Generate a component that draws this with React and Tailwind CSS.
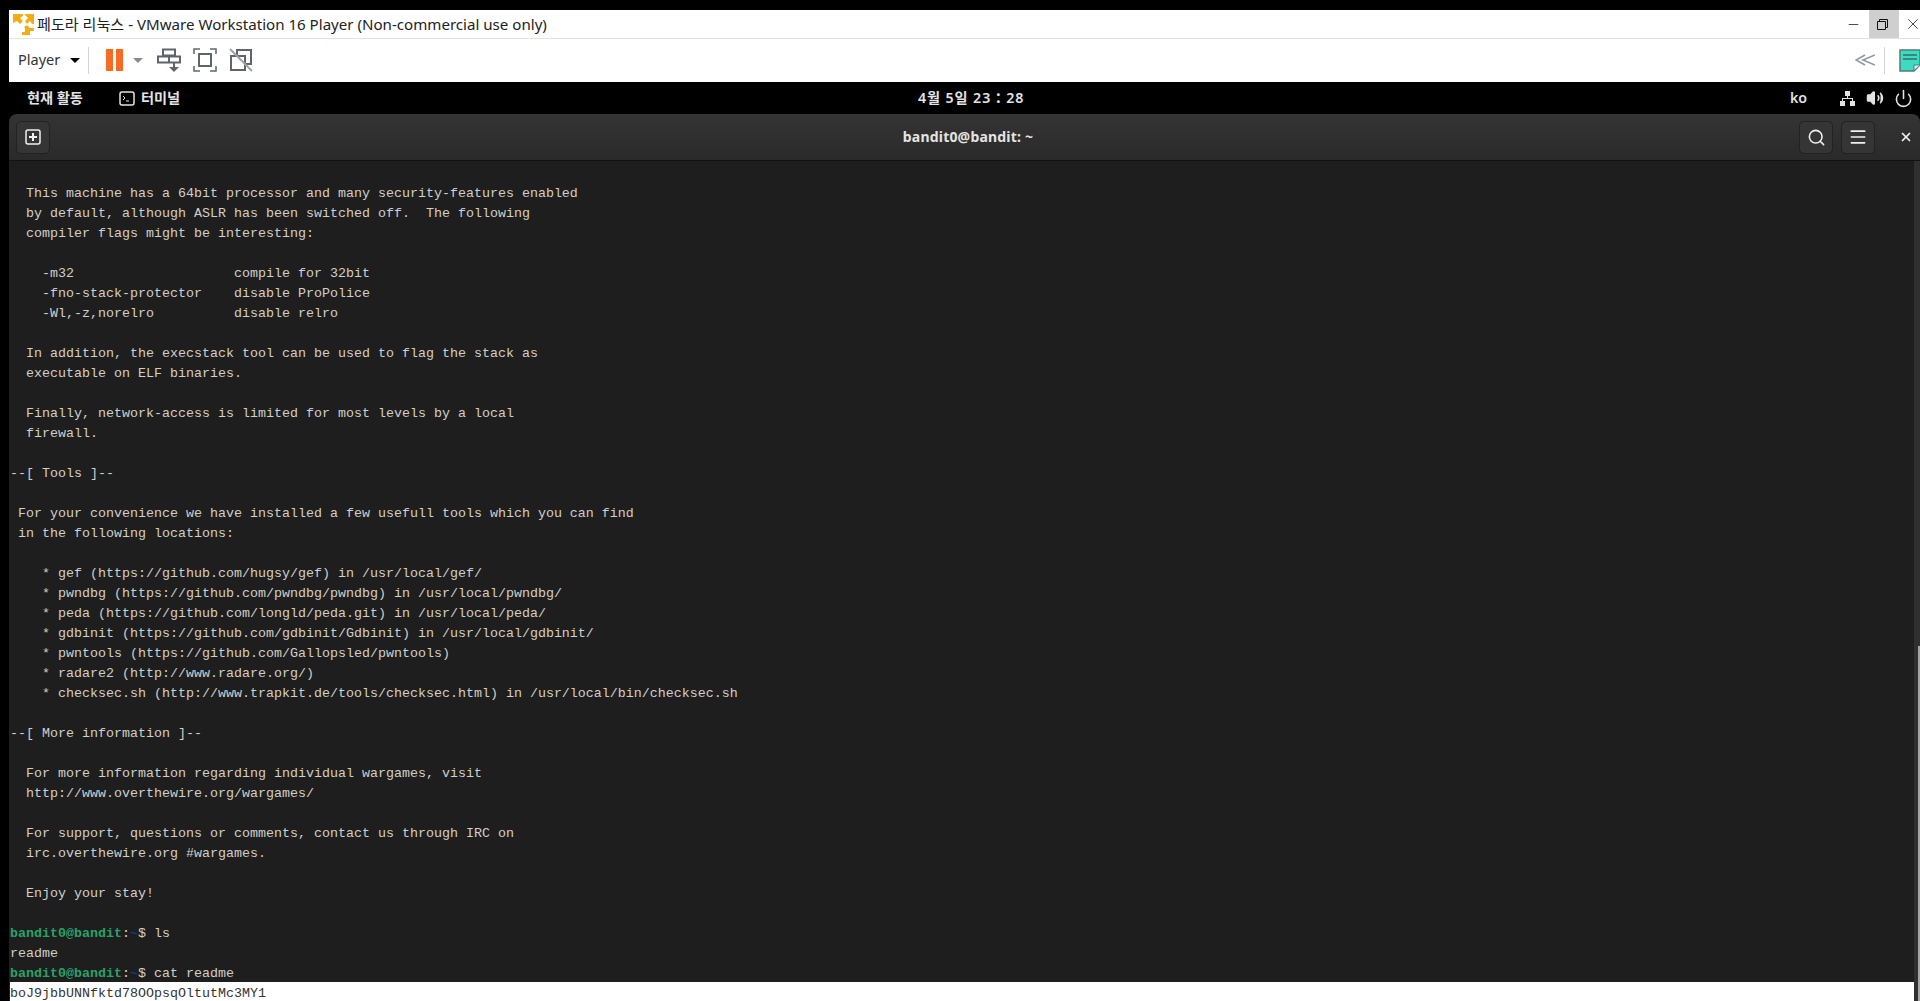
import { Search, Menu, Power, Volume2, X, Minus } from "lucide-react";

const uiFont = { fontFamily: '"Noto Sans", "Noto Sans CJK KR", sans-serif' };

const lines = [
  "  This machine has a 64bit processor and many security-features enabled",
  "  by default, although ASLR has been switched off.  The following",
  "  compiler flags might be interesting:",
  "",
  "    -m32                    compile for 32bit",
  "    -fno-stack-protector    disable ProPolice",
  "    -Wl,-z,norelro          disable relro",
  "",
  "  In addition, the execstack tool can be used to flag the stack as",
  "  executable on ELF binaries.",
  "",
  "  Finally, network-access is limited for most levels by a local",
  "  firewall.",
  "",
  "--[ Tools ]--",
  "",
  " For your convenience we have installed a few usefull tools which you can find",
  " in the following locations:",
  "",
  "    * gef (https://github.com/hugsy/gef) in /usr/local/gef/",
  "    * pwndbg (https://github.com/pwndbg/pwndbg) in /usr/local/pwndbg/",
  "    * peda (https://github.com/longld/peda.git) in /usr/local/peda/",
  "    * gdbinit (https://github.com/gdbinit/Gdbinit) in /usr/local/gdbinit/",
  "    * pwntools (https://github.com/Gallopsled/pwntools)",
  "    * radare2 (http://www.radare.org/)",
  "    * checksec.sh (http://www.trapkit.de/tools/checksec.html) in /usr/local/bin/checksec.sh",
  "",
  "--[ More information ]--",
  "",
  "  For more information regarding individual wargames, visit",
  "  http://www.overthewire.org/wargames/",
  "",
  "  For support, questions or comments, contact us through IRC on",
  "  irc.overthewire.org #wargames.",
  "",
  "  Enjoy your stay!",
  "",
];

const Prompt = ({ cmd }) => (
  <div className="h-5">
    <span className="font-bold text-[#26a269]">bandit0@bandit</span>
    <span>:</span>
    <span className="text-[#12488b]">~</span>
    <span>$ {cmd}</span>
  </div>
);

const VmLogo = () => (
  <svg width="21" height="21" viewBox="0 0 21 21" fill="#f0ae14">
    <path d="M0 0h10v2L7 4l3 3-3 3-3-3-4 2z" />
    <path d="M12 0h9v10h-2l-2-3-3 3-2-3 3-3-3-3z" />
    <path d="M11 13l3-2 3 3h4v3h-4v4H9v-3h3v-4z" />
  </svg>
);

const SendKeys = () => (
  <svg width="24" height="25" viewBox="0 0 24 25" fill="none" stroke="#5f666b" strokeWidth="2">
    <path d="M6 1.500h12v6H6zM1 8.500h11v6H1zM12 8.500h11v6H12z" />
    <path d="M17 15v4" />
    <path d="M12 19h10l-5 5z" fill="#5f666b" stroke="none" />
  </svg>
);

const FullScreen = () => (
  <svg width="24" height="24" viewBox="0 0 24 24" fill="none" stroke="#5f666b" strokeWidth="2">
    <path d="M6 6h12v12H6z" />
    <path d="M1 6V1h6M17 1h6v5M23 18v5h-6M7 23H1v-5" strokeWidth="1.500" />
  </svg>
);

const Unity = () => (
  <svg width="24" height="24" viewBox="0 0 24 24" fill="none" stroke="#5f666b" strokeWidth="2">
    <path d="M8 8V2h14v14h-6" />
    <path d="M2 8h14v14H2z" />
    <path d="M1 1l22 22" stroke="#9aa3a8" strokeWidth="2" />
  </svg>
);

const Note = () => (
  <svg width="21" height="23" viewBox="0 0 21 23">
    <path d="M1 1h20v15l-6 6H1z" fill="#3bdcc0" stroke="#4f7d7c" strokeWidth="1.500" />
    <path d="M4 6h14M4 10h14" stroke="#3d6a6c" strokeWidth="1.500" />
    <path d="M15 21v-5h6" fill="#d8f5ee" stroke="#4f7d7c" />
  </svg>
);

const Network = () => (
  <svg width="15" height="15" viewBox="0 0 15 15" fill="#e4e4e4">
    <rect x="5" y="0" width="5" height="5" />
    <rect x="0" y="10" width="5" height="5" />
    <rect x="10" y="10" width="5" height="5" />
    <path d="M7 5h1v2h5v3h-1V8H3v2H2V7h5z" />
  </svg>
);

export default function App() {
  return (
    <div className="h-[1001px] overflow-hidden bg-black pt-[10px] flex flex-col" style={uiFont}>
      {/* vmware chrome */}
      <div className="ml-[9px] bg-white">
        <div className="h-[29px] flex items-center border-b border-[#e3e3e3]">
          <div className="ml-1 mr-[3px]"><VmLogo /></div>
          <span className="text-[15.1px] text-[#222] whitespace-nowrap">
            페도라 리눅스 - VMware Workstation 16 Player (Non-commercial use only)
          </span>
          <div className="ml-auto flex items-center h-full">
            <div className="w-[30px] pr-[2px] flex justify-center"><Minus size={15} strokeWidth={1.2} color="#111" /></div>
            <div className="w-[30px] h-full pr-[3px] bg-[#cfcfcf] flex items-center justify-center">
              <svg width="11" height="11" viewBox="0 0 11 11" fill="none" stroke="#111">
                <path d="M.5 2.500h8v8h-8zM2.500 2.500v-2h8v8h-2" />
              </svg>
            </div>
            <div className="w-[21px] pl-[5px] flex"><X className="shrink-0" size={18} strokeWidth={1} color="#111" /></div>
          </div>
        </div>
        <div className="h-[43px] pb-px flex items-center">
          <span className="ml-[9px] text-[14.5px] text-[#333]">Player</span>
          <span className="ml-[10px] w-0 h-0 border-x-[5px] border-x-transparent border-t-[5px] border-t-black" />
          <span className="ml-[8px] w-px h-[27px] bg-[#d5d5d5]" />
          <span className="ml-[17px] w-[7px] h-[22px] bg-[#f96b22]" />
          <span className="ml-[3px] w-[7px] h-[22px] bg-[#f96b22]" />
          <span className="ml-[10px] w-0 h-0 border-x-[5px] border-x-transparent border-t-[5px] border-t-[#8a8a8a]" />
          <div className="ml-[14px] flex items-center gap-[12px]">
            <SendKeys />
            <FullScreen />
            <Unity />
          </div>
          <div className="ml-auto flex items-center">
            <svg width="20" height="12" viewBox="0 0 20 12" fill="none" stroke="#8b98a3" strokeWidth="1.500">
              <path d="M10 1L1 6l9 5M20 1L8 6l12 5" />
            </svg>
            <span className="ml-[9px] w-px h-[27px] bg-[#d5d5d5]" />
            <div className="ml-[14px] w-[21px] overflow-hidden"><Note /></div>
          </div>
        </div>
      </div>

      {/* gnome top bar */}
      <div className="ml-[9px] h-[32px] flex items-center relative text-[14.2px] font-semibold text-[#e4e4e4]">
        <span className="ml-[18px]">현재 활동</span>
        <svg className="ml-[36px]" width="16" height="15" viewBox="0 0 16 15" fill="none" stroke="#e4e4e4">
          <rect x="1" y="1" width="14" height="13" rx="2" strokeWidth="1.500" />
          <path d="M4 5l2 2-2 2M7 10h3" strokeWidth="1" />
        </svg>
        <span className="ml-[6px]">터미널</span>
        <span className="absolute left-[909px] tracking-[0.9px]">4월 5일 23：28</span>
        <span className="ml-auto">ko</span>
        <div className="ml-[33px]"><Network /></div>
        <Volume2 className="ml-[11px]" size={18} fill="#e4e4e4" strokeWidth={2} />
        <Power className="ml-[10px] mr-[7px]" size={19} strokeWidth={2} />
      </div>

      {/* terminal window */}
      <div className="ml-[9px] flex-1 min-h-0 flex flex-col rounded-t-[8px] overflow-hidden">
        <div className="h-[47px] shrink-0 relative flex items-center px-[4px] bg-gradient-to-b from-[#343434] to-[#2a2a2a] border-b border-[#121212]">
          <button className="relative z-10 ml-[3px] w-[34px] h-[33px] rounded-[5px] bg-[#353535] border border-[#222] flex items-center justify-center">
            <svg width="16" height="16" viewBox="0 0 16 16" fill="none" stroke="#f0f0f0" strokeWidth="1.500">
              <rect x="1" y="1" width="14" height="14" rx="2" />
              <path d="M8 4v8M4 8h8" strokeWidth="2" />
            </svg>
          </button>
          <span className="absolute inset-x-0 pl-[7px] pb-px text-center text-[14px] font-bold text-[#e4e4e4] tracking-[0.2px]">bandit0@bandit: ~</span>
          <div className="ml-auto flex items-center relative">
            <button className="w-[34px] h-[33px] rounded-[5px] bg-[#353535] border border-[#222] flex items-center justify-center">
              <Search size={19} strokeWidth={2} color="#f0f0f0" />
            </button>
            <button className="ml-[8px] w-[34px] h-[33px] rounded-[5px] bg-[#353535] border border-[#222] flex items-center justify-center">
              <Menu size={20} strokeWidth={2} color="#f0f0f0" />
            </button>
            <X className="ml-[24px] mr-[3px]" size={14} strokeWidth={3} color="#f0f0f0" />
          </div>
        </div>
        <div className="flex-1 min-h-0 flex bg-[#1e1e1e]">
          <div className="flex-1 min-w-0 pt-[21px] pl-px font-['Liberation_Mono',monospace] text-[13.33px] leading-[24px] text-[#d0cfcc] whitespace-pre">
            {lines.map((l, i) => (
              <div key={i} className="h-5">{l}</div>
            ))}
            <Prompt cmd="ls" />
            <div className="h-5">readme</div>
            <Prompt cmd="cat readme" />
            <div className="h-[24px] bg-white text-[#333]">boJ9jbbUNNfktd78OOpsqOltutMc3MY1</div>
          </div>
          <div className="w-[6px] bg-[#2f2f2f] flex flex-col items-end">
            <div className="h-[485px] shrink-0" />
            <div className="w-[2px] flex-1 bg-[#a5a5a5]" />
          </div>
        </div>
      </div>
    </div>
  );
}
